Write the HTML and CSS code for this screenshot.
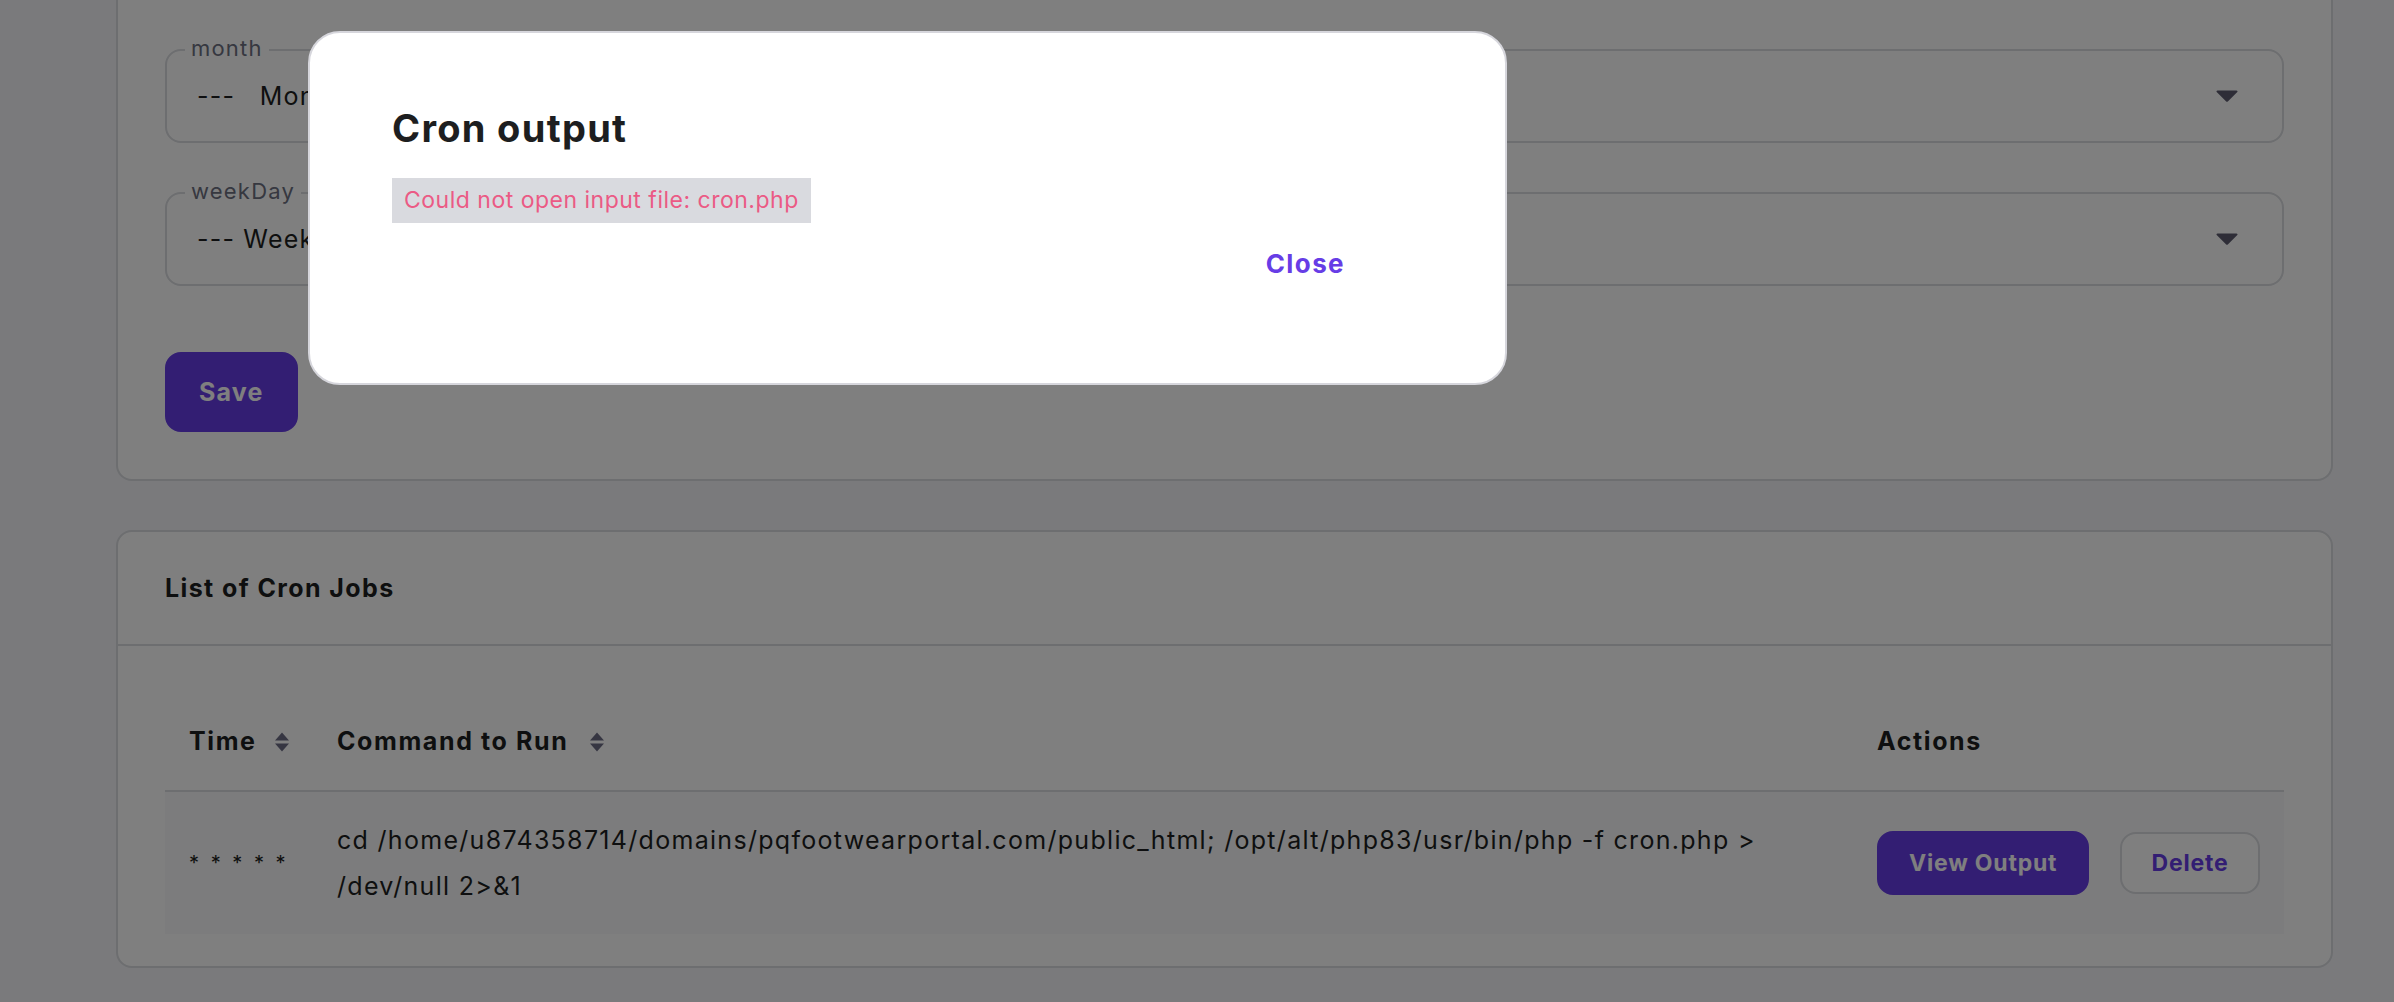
FILE: index.html
```html
<!DOCTYPE html>
<html lang="en">
<head>
    <meta charset="UTF-8">
    <meta name="viewport" content="width=device-width, initial-scale=1.0">
    <title>Cron Jobs</title>
    <link rel="stylesheet" href="styles.css">
</head>
<body>
    <div class="page">
        <section class="card form-card">
            <div class="field">
                <span class="field-label">month</span>
                <div class="select">
                    <span>---&nbsp;&nbsp; Month ---</span>
                    <svg class="caret" width="22" height="12" viewBox="0 0 22 12"><path d="M1.5 0.5h19a1 1 0 0 1 .8 1.6l-9.5 9.4a1.2 1.2 0 0 1-1.6 0L.7 2.1A1 1 0 0 1 1.5.5z"/></svg>
                </div>
            </div>
            <div class="field">
                <span class="field-label">weekDay</span>
                <div class="select">
                    <span>--- Weekday ---</span>
                    <svg class="caret" width="22" height="12" viewBox="0 0 22 12"><path d="M1.5 0.5h19a1 1 0 0 1 .8 1.6l-9.5 9.4a1.2 1.2 0 0 1-1.6 0L.7 2.1A1 1 0 0 1 1.5.5z"/></svg>
                </div>
            </div>
            <button class="btn btn-primary btn-save">Save</button>
        </section>

        <section class="card list-card">
            <div class="card-header">List of Cron Jobs</div>
            <div class="card-body">
                <table class="jobs">
                    <thead>
                        <tr>
                            <th class="col-time">Time<svg class="sort" width="16" height="20" viewBox="0 0 16 20"><path d="M8 0.5l7 8H1z M8 19.5l7-8H1z"/></svg></th>
                            <th class="col-cmd">Command to Run<svg class="sort" width="16" height="20" viewBox="0 0 16 20"><path d="M8 0.5l7 8H1z M8 19.5l7-8H1z"/></svg></th>
                            <th class="col-actions">Actions</th>
                        </tr>
                    </thead>
                    <tbody>
                        <tr>
                            <td class="time">* * * * *</td>
                            <td class="cmd">cd /home/u874358714/domains/pqfootwearportal.com/public_html; /opt/alt/php83/usr/bin/php -f cron.php &gt; /dev/null 2&gt;&amp;1</td>
                            <td class="actions">
                                <button class="btn btn-primary btn-small">View Output</button>
                                <button class="btn btn-outline btn-small">Delete</button>
                            </td>
                        </tr>
                    </tbody>
                </table>
            </div>
        </section>
    </div>

    <div class="backdrop"></div>

    <div class="modal">
        <h2 class="modal-title">Cron output</h2>
        <code class="output">Could not open input file: cron.php</code>
        <div class="modal-footer">
            <button class="btn-text">Close</button>
        </div>
    </div>
</body>
</html>
```

FILE: styles.css
```css
body {
    margin: 0;
    font-family: Inter, "DejaVu Sans", sans-serif;
    font-size: 25px;
    letter-spacing: 1.2px;
    color: #1d1e20;
    background: #f4f4f8;
}
.page {
    padding: 0 61px 0 116px;
}
.card {
    background: white;
    border: 2px solid #dadce0;
    border-radius: 16px;
}
.form-card {
    border-top: none;
    border-radius: 0 0 16px 16px;
    padding: 49px 47px 47px;
}
.field {
    position: relative;
    margin-bottom: 49px;
}
.field-label {
    position: absolute;
    top: -13px;
    left: 20px;
    padding: 0 6px;
    background: white;
    color: #6d7081;
    font-size: 22px;
    line-height: 24px;
}
.select {
    display: flex;
    justify-content: space-between;
    align-items: center;
    height: 94px;
    box-sizing: border-box;
    padding: 0 44px 0 30px;
    border: 2px solid #dadce0;
    border-radius: 16px;
}
.caret {
    fill: #5c5b6e;
}
.btn {
    font-family: inherit;
    font-weight: 700;
    letter-spacing: inherit;
    border-radius: 16px;
    cursor: pointer;
}
.btn-primary {
    background: #673de6;
    color: white;
    border: 2px solid #673de6;
}
.btn-outline {
    background: white;
    color: #673de6;
    border: 2px solid #dadce0;
}
.btn-save {
    margin-top: 17px;
    padding: 22px 32px;
    font-size: 25px;
    line-height: 32px;
}
.list-card {
    margin-top: 49px;
}
.card-header {
    padding: 40px 47px;
    font-weight: 700;
    line-height: 32px;
    letter-spacing: 1.4px;
    border-bottom: 2px solid #dadce0;
}
.card-body {
    padding: 46px 47px 32px;
}
.jobs {
    width: 100%;
    border-collapse: collapse;
    table-layout: fixed;
}
.jobs th {
    text-align: left;
    padding: 33px 24px;
    line-height: 32px;
    font-weight: 700;
    letter-spacing: 1.6px;
    border-bottom: 2px solid #dadce0;
    white-space: nowrap;
}
.col-time {
    width: 100px;
}
.col-cmd {
    width: 1492px;
}
.sort {
    fill: #6d6c85;
    margin-left: 17px;
    vertical-align: -2px;
}
.col-cmd .sort {
    margin-left: 21px;
}
.jobs td {
    background: #f8f8fa;
    padding: 25px 24px;
    line-height: 46px;
    vertical-align: middle;
}
.jobs td.time {
    font-size: 20px;
    letter-spacing: 3px;
}
.jobs td.cmd {
    letter-spacing: 1.3px;
}
.actions {
    white-space: nowrap;
}
.btn-small {
    padding: 14px 30px;
    font-size: 23px;
    letter-spacing: 0.8px;
    line-height: 32px;
}
.btn-outline.btn-small {
    margin-left: 22px;
    padding: 13px 30px;
}
.backdrop {
    position: fixed;
    inset: 0;
    background: rgba(0, 0, 0, 0.5);
}
.modal {
    position: absolute;
    top: 31px;
    left: 308px;
    width: 1199px;
    box-sizing: border-box;
    padding: 73px 82px 95px;
    background: white;
    border: 2px solid #d6d6dc;
    border-radius: 32px;
}
.modal-title {
    margin: 0 0 28px;
    font-size: 38px;
    line-height: 44px;
    font-weight: 700;
    letter-spacing: 1.3px;
}
.output {
    display: inline-block;
    padding: 6px 12px;
    background: #d9dadf;
    color: #eb5a85;
    font-family: inherit;
    font-size: 23px;
    letter-spacing: 0.5px;
    line-height: 33px;
}
.modal-footer {
    display: flex;
    justify-content: flex-end;
    margin-top: 17px;
    padding-right: 54px;
}
.btn-text {
    padding: 12px 24px;
    border: none;
    background: none;
    color: #673de6;
    font-family: inherit;
    font-size: 26px;
    font-weight: 700;
    letter-spacing: 1.4px;
    line-height: 24px;
    cursor: pointer;
}
```
